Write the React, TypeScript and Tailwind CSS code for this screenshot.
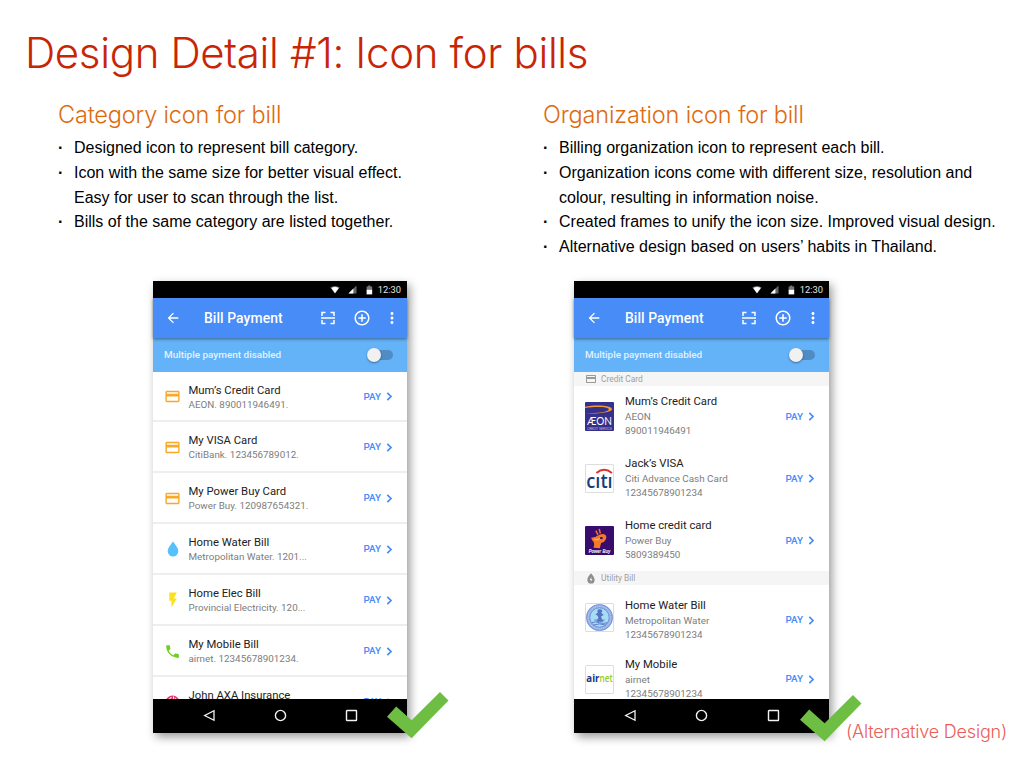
import type { ReactNode } from 'react';
import {
  MdAddCircleOutline,
  MdArrowBack,
  MdCreditCard,
  MdFlashOn,
  MdMoreVert,
  MdPhone,
} from 'react-icons/md';

function StatusBar() {
  return (
    <div className="flex h-[17px] shrink-0 items-center justify-end bg-black pr-[6px] text-white">
      <svg className="mr-[8px] h-[9px] w-[10px]" viewBox="0 0 10 9">
        <path d="M0.4 2.4Q5-0.6 9.600 2.400L5 8.600Z" fill="#777" />
        <path d="M1.300 3Q5 1.200 8.700 3L5 8.200Z" fill="#fff" />
      </svg>
      <svg className="mr-[9px] h-[9px] w-[9px]" viewBox="0 0 9 9">
        <path d="M8.5 0.5V8.5H0.5Z" fill="#666" />
        <path d="M5.4 3.6V8.5H0.5Z" fill="#fff" />
      </svg>
      <svg className="mr-[5px] h-[10px] w-[7px]" viewBox="0 0 7 10">
        <path d="M2.2 0.4h2.2v1h1.8v3.8H0.6V1.4h1.6z" fill="#777" />
        <path d="M0.6 4.8h5.6v4.6H0.6z" fill="#fff" />
      </svg>
      <span className="text-[9.3px] leading-none text-[#e4e4e4]">12:30</span>
    </div>
  );
}

function Toolbar() {
  return (
    <div className="relative z-10 flex h-[40px] shrink-0 items-center bg-[#478cf7] pl-[12px] text-white shadow-[0_1px_3px_rgba(0,0,0,0.45)]">
      <MdArrowBack className="size-[16px]" />
      <span className="ml-[23px] w-[116px] pt-[1px] text-[13.900px] font-medium leading-none tracking-[0.080px]">Bill Payment</span>
      <svg className="size-[16px]" viewBox="0 0 16 16" fill="none" stroke="currentColor" strokeWidth="1.5">
        <path d="M2 6V2.5H5.5M10.500 2.500H14V6M14 10V13.500H10.500M5.500 13.500H2V10M1 8H15" />
      </svg>
      <MdAddCircleOutline className="ml-[17px] size-[18px]" />
      <MdMoreVert className="ml-[11.500px] size-[18px]" />
    </div>
  );
}

function ToggleStrip() {
  return (
    <div className="flex h-[34px] shrink-0 items-center justify-between bg-[#64b2f7] pl-[11px] pr-[14px]">
      <span className="text-[9.950px] font-medium leading-none text-[#e3f1fe]">Multiple payment disabled</span>
      <span className="flex h-[10px] w-[26px] items-center rounded-full bg-gradient-to-r from-[#64b2f7] from-30% to-[#4f8cc4] to-30%">
        <span className="size-[14px] shrink-0 rounded-full bg-[#f1f1f1] shadow-[0_1px_2px_rgba(0,0,0,0.4)]" />
      </span>
    </div>
  );
}

function NavBar() {
  return (
    <div className="flex h-[34px] shrink-0 items-center justify-between bg-black pb-[1px] pl-[50px] pr-[49.500px]">
      <svg className="size-[13px]" viewBox="0 0 13 13" fill="none" stroke="#f2f2f2" strokeWidth="1.3">
        <path d="M11 1.700V11.300L1.700 6.500Z" />
      </svg>
      <svg className="size-[13px]" viewBox="0 0 13 13" fill="none" stroke="#f2f2f2" strokeWidth="1.4">
        <circle cx="6.500" cy="6.500" r="5.100" />
      </svg>
      <svg className="size-[13px]" viewBox="0 0 13 13" fill="none" stroke="#f2f2f2" strokeWidth="1.4">
        <rect x="1.500" y="1.500" width="10" height="10" rx="0.500" />
      </svg>
    </div>
  );
}

function Pay() {
  return (
    <span className="flex items-center text-[#478cf7]">
      <span className="w-[22px] text-[9.900px] font-medium leading-none">PAY</span>
      <svg className="h-[9px] w-[7px]" viewBox="0 0 7 9" fill="none" stroke="currentColor" strokeWidth="1.7">
        <path d="M1.300 0.900L5 4.500L1.300 8.100" />
      </svg>
    </span>
  );
}

function Phone({ children }: { children: ReactNode }) {
  return (
    <div className="flex h-[452px] flex-col bg-white font-[Roboto,sans-serif] shadow-[3px_4px_9px_rgba(0,0,0,0.4)]">
      <StatusBar />
      <Toolbar />
      <ToggleStrip />
      <div className="min-h-0 flex-1 overflow-hidden">{children}</div>
      <NavBar />
    </div>
  );
}

function CheckMark() {
  return (
    <svg className="h-[47px] w-[62px]" viewBox="0 0 62 47" fill="#6fbe44">
      <path d="M0 24.800L9.200 14.500L24.600 28.300L53 0L61.500 8.500L24.600 46.300Z" />
    </svg>
  );
}

const card = <MdCreditCard className="size-[17px] text-[#f8a928]" />;

const bills = [
  { title: 'Mum’s Credit Card', detail: 'AEON. 890011946491.', icon: card },
  { title: 'My VISA Card', detail: 'CitiBank. 123456789012.', icon: card },
  { title: 'My Power Buy Card', detail: 'Power Buy. 120987654321.', icon: card },
  {
    title: 'Home Water Bill',
    detail: 'Metropolitan Water. 1201...',
    icon: (
      <svg className="h-[16px] w-[12px]" viewBox="0 0 12 16" fill="#56c1fa">
        <path d="M6 0.500C8.500 4 11.300 7 11.300 10.200A5.300 5.300 0 0 1 0.700 10.200C0.700 7 3.500 4 6 0.500Z" />
      </svg>
    ),
  },
  {
    title: 'Home Elec Bill',
    detail: 'Provincial Electricity. 120...',
    icon: <MdFlashOn className="size-[18px] text-[#f9e11e]" />,
  },
  {
    title: 'My Mobile Bill',
    detail: 'airnet. 12345678901234.',
    icon: <MdPhone className="size-[17px] text-[#6fd01d]" />,
  },
  {
    title: 'John AXA Insurance',
    detail: 'AXA. 12345678901234.',
    icon: (
      <svg className="size-[15px]" viewBox="0 0 14 14">
        <circle cx="7" cy="7" r="6.500" fill="#e8336d" />
        <path d="M3 5L6 2M8 1.500V6M9.500 3L12 6" stroke="#fff" strokeWidth="1" fill="none" />
      </svg>
    ),
  },
];

function CategoryList() {
  return (
    <ul>
      {bills.map((bill) => (
        <li
          key={bill.title}
          className="flex h-[51px] items-center border-b-2 border-[#eeeeee] pr-[14.500px] pt-[1px] first:h-[50px]"
        >
          <span className="flex w-[35.500px] justify-center pl-[4px]">{bill.icon}</span>
          <span className="flex flex-1 flex-col gap-[2px] pt-[2px]">
            <span className="text-[11.300px] leading-[12px] text-[#222]">{bill.title}</span>
            <span className="text-[9.850px] leading-[12px] text-[#7d7d7d]">{bill.detail}</span>
          </span>
          <Pay />
        </li>
      ))}
    </ul>
  );
}

function AeonLogo() {
  return (
    <svg className="size-[29px]" viewBox="0 0 28 28">
      <rect width="28" height="28" rx="1" fill="#34308c" />
      <path d="M0 4.500C10 2.500 26 3 26 7C26 10 12 11.500 0 11.300C12 10.500 23 9.500 23 7.200C23 4.500 10 4.400 0 5.800Z" fill="#f49a35" />
      <text x="14" y="22.600" textAnchor="middle" textLength="24" lengthAdjust="spacingAndGlyphs" fontFamily="Lato, sans-serif" fontWeight="400" fontSize="10.500" fill="#fff">
        ÆON
      </text>
      <text x="14" y="26.700" textAnchor="middle" textLength="24" lengthAdjust="spacingAndGlyphs" fontFamily="Liberation Sans, sans-serif" fontSize="3.400" fill="#c4c2e6">
        CREDIT SERVICE
      </text>
    </svg>
  );
}

function CitiLogo() {
  return (
    <svg className="size-[29px]" viewBox="0 0 28 28">
      <rect x="0.500" y="0.500" width="27" height="27" rx="1" fill="#fff" stroke="#dedede" />
      <text x="14" y="22.700" textAnchor="middle" textLength="25.500" lengthAdjust="spacingAndGlyphs" fontFamily="Open Sans, sans-serif" fontWeight="600" fontSize="18.500" fill="#123f7c">
        cıtı
      </text>
      <path d="M11 8.600Q18.500 2.500 26 8.600" fill="none" stroke="#e0312f" strokeWidth="1.900" />
    </svg>
  );
}

function PowerBuyLogo() {
  return (
    <svg className="size-[29px]" viewBox="0 0 28 28">
      <rect width="28" height="28" rx="1" fill="#3a0b6e" />
      <path d="M6 11Q9.500 11.500 12 9.500Q16.500 6.500 19.500 8.500Q21.500 10.500 19.800 13.500Q18.500 16 15.500 16.500L14.300 21.500L8.300 21Q9.500 17 8 15Q6.300 13.500 6 11Z" fill="#f47a2b" />
      <path d="M10.500 4.500L12.500 8.500M13.700 2.800L14.800 7.200" stroke="#f26e2d" strokeWidth="1.500" fill="none" />
      <ellipse cx="15.800" cy="11.700" rx="1.500" ry="1" fill="#3a0b6e" />
      <path d="M9 12.500Q12 14.500 14 12" stroke="#ffc04d" fill="none" />
      <text x="14" y="26" textAnchor="middle" textLength="21" lengthAdjust="spacingAndGlyphs" fontFamily="Liberation Sans, sans-serif" fontWeight="700" fontStyle="italic" fontSize="4.400" fill="#fff">
        Power Buy
      </text>
    </svg>
  );
}

function WaterworksLogo() {
  return (
    <svg className="size-[29px]" viewBox="0 0 28 28">
      <rect x="0.500" y="0.500" width="27" height="27" rx="1" fill="#fff" stroke="#dedede" />
      <circle cx="14" cy="14" r="12.900" fill="#8fabe2" />
      <circle cx="14" cy="14" r="12.500" fill="none" stroke="#6c8bd2" strokeWidth="0.700" />
      <circle cx="14" cy="14" r="10.900" fill="none" stroke="#b6cdf1" strokeWidth="1.300" strokeDasharray="1 0.800" />
      <circle cx="14" cy="14" r="9.300" fill="#a7dcf5" stroke="#6a8ad0" strokeWidth="0.700" />
      <path d="M12.500 6.300Q15 5.300 16.600 7Q17 8.700 15.600 9.500L18 11.500L15.500 13L16.500 16L18 18H11L13 14L12 12L10 11L12.300 9.500Q11.500 7.800 12.500 6.300Z" fill="#5574c0" />
      <path d="M6.500 19Q10 17.500 14 19T21.500 19M8 21.300Q14 19 20 21.300M9 16.500H19" fill="none" stroke="#5878c4" strokeWidth="0.900" />
    </svg>
  );
}

function AirnetLogo() {
  return (
    <svg className="size-[29px]" viewBox="0 0 28 28">
      <rect x="0.500" y="0.500" width="27" height="27" rx="1" fill="#fff" stroke="#dedede" />
      <text x="1.300" y="16.600" textLength="12.700" lengthAdjust="spacingAndGlyphs" fontFamily="Open Sans, sans-serif" fontWeight="700" fontSize="10.500" fill="#21337d">
        air
      </text>
      <text x="14" y="16.600" textLength="12.700" lengthAdjust="spacingAndGlyphs" fontFamily="Open Sans, sans-serif" fontWeight="600" fontSize="10.500" fill="#96c81e">
        net
      </text>
    </svg>
  );
}

function SectionHeader({ icon, label }: { icon: ReactNode; label: string }) {
  return (
    <div className="flex h-[14px] items-center bg-[#f5f5f5] pl-[11px]">
      <span className="flex w-[16px] justify-start">{icon}</span>
      <span className="text-[8.400px] leading-none text-[#a0a0a0]">{label}</span>
    </div>
  );
}

type OrgBillProps = { logo: ReactNode; title: string; org: string; number: string; className: string };

function OrgBill({ logo, title, org, number, className }: OrgBillProps) {
  return (
    <div className={`flex items-center pl-[11px] pr-[14.500px] ${className}`}>
      {logo}
      <span className="ml-[11px] flex flex-1 flex-col pb-[1px]">
        <span className="text-[11.300px] leading-[16px] text-[#222]">{title}</span>
        <span className="text-[9.900px] leading-[14px] text-[#7d7d7d]">{org}</span>
        <span className="text-[9.850px] leading-[14px] text-[#7d7d7d]">{number}</span>
      </span>
      <Pay />
    </div>
  );
}

function OrganizationList() {
  return (
    <div>
      <SectionHeader icon={<MdCreditCard className="size-[12px] text-[#9a9a9a]" />} label="Credit Card" />
      <OrgBill className="h-[61px]" logo={<AeonLogo />} title="Mum’s Credit Card" org="AEON" number="890011946491" />
      <OrgBill className="h-[62px] pt-[1px]" logo={<CitiLogo />} title="Jack’s VISA" org="Citi Advance Cash Card" number="12345678901234" />
      <OrgBill className="h-[62px] pt-[1px]" logo={<PowerBuyLogo />} title="Home credit card" org="Power Buy" number="5809389450" />
      <SectionHeader
        icon={
          <svg className="h-[11px] w-[12px]" viewBox="0 0 12 11">
            <path d="M6 0.300C8 2.800 9.600 4.500 9.600 6.900A3.600 3.600 0 0 1 2.400 6.900C2.400 4.500 4 2.800 6 0.300Z" fill="#8e8e8e" />
            <path d="M6.500 4L4.700 7H6L5.600 9L7.400 6.300H6.200Z" fill="#fff" />
          </svg>
        }
        label="Utility Bill"
      />
      <OrgBill
        className="h-[69px] pt-[1px]"
        logo={<span className="pb-[6px]"><WaterworksLogo /></span>}
        title="Home Water Bill"
        org="Metropolitan Water"
        number="12345678901234"
      />
      <OrgBill className="h-[50px]" logo={<AirnetLogo />} title="My Mobile" org="airnet" number="12345678901234" />
    </div>
  );
}

function Points({ items }: { items: string[][] }) {
  return (
    <ul className="mt-[6px] text-[16px] leading-[24.750px] text-black">
      {items.map((lines) => (
        <li key={lines[0]} className="flex">
          <span className="w-[16px] shrink-0 font-bold">·</span>
          <span className="whitespace-nowrap">
            {lines.map((line) => (
              <span key={line} className="block">{line}</span>
            ))}
          </span>
        </li>
      ))}
    </ul>
  );
}

export default function App() {
  return (
    <main className="relative h-[768px] w-[1024px] overflow-hidden bg-white font-['Liberation_Sans',sans-serif]">
      <h1 className="h-[100px] whitespace-nowrap pl-[25px] pt-[27px] font-[Inter,sans-serif] text-[42px] font-light leading-[52px] tracking-[-0.340px] text-[#c82506]">
        Design Detail #1: Icon for bills
      </h1>
      <div className="grid h-[181px] grid-cols-[485px_1fr] pl-[58px]">
        <section>
          <h2 className="h-[30px] whitespace-nowrap font-[Inter,sans-serif] text-[23.500px] font-light leading-[30px] tracking-[-0.170px] text-[#de6a10]">
            Category icon for bill
          </h2>
          <Points
            items={[
              ['Designed icon to represent bill category.'],
              ['Icon with the same size for better visual effect.', 'Easy for user to scan through the list.'],
              ['Bills of the same category are listed together.'],
            ]}
          />
        </section>
        <section>
          <h2 className="h-[30px] whitespace-nowrap font-[Inter,sans-serif] text-[23.500px] font-light leading-[30px] tracking-[-0.160px] text-[#de6a10]">
            Organization icon for bill
          </h2>
          <Points
            items={[
              ['Billing organization icon to represent each bill.'],
              ['Organization icons come with different size, resolution and', 'colour, resulting in information noise.'],
              ['Created frames to unify the icon size. Improved visual design.'],
              ['Alternative design based on users’ habits in Thailand.'],
            ]}
          />
        </section>
      </div>
      <div className="grid grid-cols-[254px_255px] gap-[167px] pl-[153px]">
        <Phone>
          <CategoryList />
        </Phone>
        <Phone>
          <OrganizationList />
        </Phone>
      </div>
      <div className="absolute left-[387px] top-[692px]">
        <CheckMark />
      </div>
      <div className="absolute left-[800px] top-[695px]">
        <CheckMark />
      </div>
      <p className="absolute left-[846px] top-[720px] whitespace-nowrap font-[Inter,sans-serif] text-[18px] font-light leading-[24px] tracking-[-0.200px] text-[#ec5d57]">
        (Alternative Design)
      </p>
    </main>
  );
}
